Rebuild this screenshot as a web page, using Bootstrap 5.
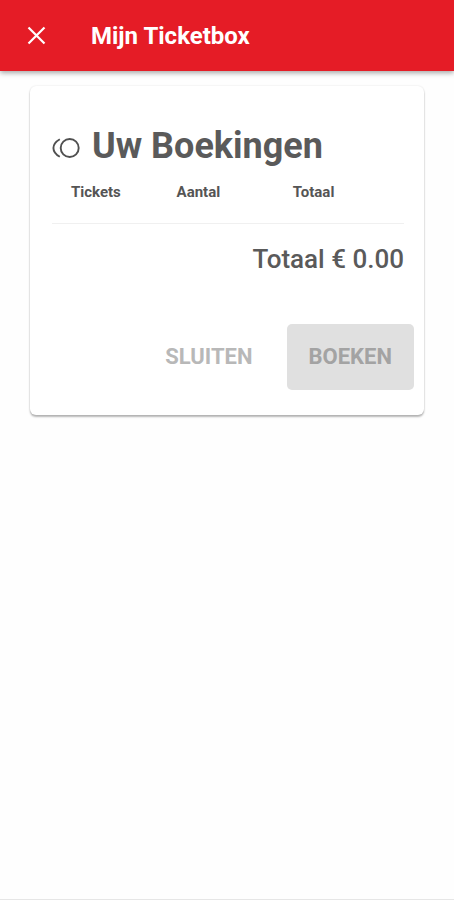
<!DOCTYPE html>
<html lang="nl">
<head>
<meta charset="utf-8">
<meta name="viewport" content="width=device-width, initial-scale=1">
<title>Mijn Ticketbox</title>
<link href="https://cdn.jsdelivr.net/npm/bootstrap@5.3.0/dist/css/bootstrap.min.css" rel="stylesheet">
<style>
body { font-family: Roboto, "Noto Sans", sans-serif; background: #fefefe; color: #555; }
.topbar { background: #e51c26; height: 71px; padding: 0 24px; gap: 42px; box-shadow: 0 2px 5px rgba(0,0,0,.35); }
.topbar h1 { font-size: 24px; line-height: 32px; font-weight: 700; }
.close-btn { width: 25px; height: 25px; }
.page-body { padding: 15px 30px; }
.booking { border-radius: 6px; background: #fff; border: 0; padding: 38px 10px 25px 22px; box-shadow: 0 2px 2px rgba(0,0,0,.28), 0 0 2px rgba(0,0,0,.12); }
.booking-main { padding-right: 10px; }
.booking h2 { font-size: 36px; line-height: 44px; font-weight: 700; color: #5a5a5a; }
.title-row { gap: 12px; }
.tickets th { font-size: 15px; line-height: 20px; font-weight: 700; color: #555; background: none; padding: 14px 0 21px 19px; border-color: #f0f0f0; }
.c-name { width: 30%; }
.c-count { width: 33%; }
.sum { font-size: 26px; line-height: 32px; font-weight: 500; margin: 19px 0 49px; color: #5a5a5a; }
.actions { gap: 12px; }
.actions .btn { font-size: 22px; line-height: 30px; font-weight: 700; height: 66px; padding: 0 22px; border: 0; border-radius: 5px; opacity: 1; }
.actions .btn-plain { color: #b8b8b8; }
.actions .btn-fill, .actions .btn-fill:disabled { color: #a3a3a3; background: #e0e0e0; }
.page-end { border-color: #e6e6e6 !important; }
</style>
<script src="https://cdn.jsdelivr.net/npm/bootstrap@5.3.0/dist/js/bootstrap.bundle.min.js"></script>
</head>
<body>
<div class="d-flex flex-column min-vh-100 border-bottom page-end">
  <header class="topbar d-flex align-items-center text-white">
    <button type="button" class="close-btn btn p-0 border-0 d-flex text-white" aria-label="Sluiten">
      <svg width="25" height="25" viewBox="0 0 25 25" fill="none" stroke="currentColor" stroke-width="2.2" aria-hidden="true"><path d="M4.5 4.5 20.5 20.5M20.5 4.5 4.5 20.5"/></svg>
    </button>
    <h1 class="mb-0">Mijn Ticketbox</h1>
  </header>
  <main class="page-body">
    <section class="booking card">
      <div class="booking-main">
        <div class="title-row d-flex align-items-center">
          <svg width="28" height="22" viewBox="0 0 28 22" fill="none" stroke="#505050" stroke-width="1.9" aria-hidden="true" class="flex-shrink-0 mt-1"><circle cx="17.7" cy="11" r="9"/><path d="M7.8 2.2C-.7 7.1-.7 14.9 7.8 19.8"/></svg>
          <h2 class="mb-0">Uw Boekingen</h2>
        </div>
        <table class="tickets table mb-0">
          <thead><tr><th scope="col" class="c-name">Tickets</th><th scope="col" class="c-count">Aantal</th><th scope="col">Totaal</th></tr></thead>
        </table>
        <p class="sum text-end">Totaal € 0.00</p>
      </div>
      <div class="actions d-flex justify-content-end">
        <button type="button" class="btn btn-plain">SLUITEN</button>
        <button type="button" class="btn btn-fill" disabled>BOEKEN</button>
      </div>
    </section>
  </main>
</div>
</body>
</html>
